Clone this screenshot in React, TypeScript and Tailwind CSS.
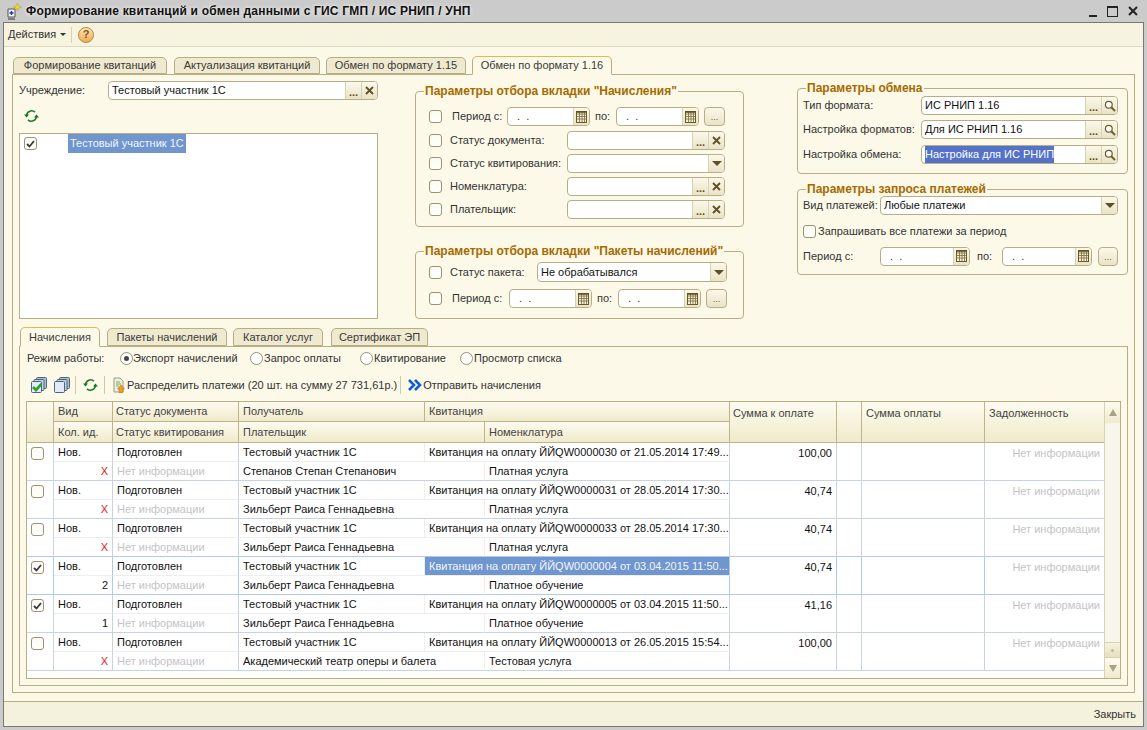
import type { ReactNode } from "react";

// 1C-style form: colours taken from the reference
const FONT = "font-['Liberation_Sans',Arial,sans-serif]";

function Checkbox({ checked }: { checked?: boolean }) {
  return (
    <span className="flex h-[13px] w-[13px] shrink-0 items-center justify-center rounded-[3px] border border-[#9c9373] bg-gradient-to-b from-[#fbfaf2] to-white">
      {checked && (
        <svg width="9" height="8" viewBox="0 0 9 8">
          <path d="M1 4l2.5 2.5L8 1" fill="none" stroke="#3a3a3a" strokeWidth="1.8" />
        </svg>
      )}
    </span>
  );
}

function Radio({ checked }: { checked?: boolean }) {
  return (
    <span className="flex h-[13px] w-[13px] shrink-0 items-center justify-center rounded-full border border-[#9c9373] bg-white">
      {checked && <span className="h-[5px] w-[5px] rounded-full bg-[#444]" />}
    </span>
  );
}

function CalendarIcon() {
  return (
    <svg width="11" height="12" viewBox="0 0 11 12">
      <rect x="0.5" y="0.5" width="10" height="11" fill="#f5f0d8" stroke="#6a5a2a" />
      <path d="M1 3h9M1 5.5h9M1 8h9M3.5 1v10M6 1v10M8.5 1v10" stroke="#7a6a3a" strokeWidth="0.8" />
      <path d="M0 1h11" stroke="#5f5024" strokeWidth="1.4" />
    </svg>
  );
}

function SearchIcon() {
  return (
    <svg width="12" height="12" viewBox="0 0 12 12">
      <circle cx="4.8" cy="4.8" r="3.4" fill="#fff" stroke="#6a5a2a" strokeWidth="1.2" />
      <path d="M7.5 7.5L11 11" stroke="#6a5a2a" strokeWidth="1.8" />
    </svg>
  );
}

function CrossIcon() {
  return (
    <svg width="9" height="9" viewBox="0 0 9 9">
      <path d="M1 1l7 7M8 1L1 8" stroke="#5f5024" strokeWidth="1.8" />
    </svg>
  );
}

function RefreshIcon() {
  return (
    <svg width="15" height="14" viewBox="0 0 15 14">
      <path d="M2.6 6.5A5 5 0 0 1 11 3.2" fill="none" stroke="#1f7a2a" strokeWidth="1.6" />
      <path d="M12.4 7.5A5 5 0 0 1 4 10.8" fill="none" stroke="#1f7a2a" strokeWidth="1.6" />
      <path d="M0 5.5h5L2.5 8.5zM15 8.5h-5l2.5-3z" fill="#1f6f28" />
    </svg>
  );
}

function CellButton({ children, w = "w-[16px]" }: { children: ReactNode; w?: string }) {
  return (
    <span className={`flex ${w} shrink-0 items-center justify-center border-l border-[#d8d2b2] bg-gradient-to-b from-[#fbf8ea] to-[#e9e3c6]`}>
      {children}
    </span>
  );
}

const Dots = () => (
  <CellButton>
    <span className="mt-[3px] text-[11px] leading-none font-bold text-[#5f5024]">...</span>
  </CellButton>
);
const Cross = () => (
  <CellButton>
    <CrossIcon />
  </CellButton>
);
const Search = () => (
  <CellButton>
    <SearchIcon />
  </CellButton>
);
const Calendar = () => (
  <CellButton>
    <CalendarIcon />
  </CellButton>
);
const Arrow = () => (
  <CellButton>
    <span className="h-0 w-0 border-x-[5px] border-t-[5px] border-x-transparent border-t-[#5f5024]" />
  </CellButton>
);

function Field({ w, h = "h-[19px]", children, value }: { w: string; h?: string; children?: ReactNode; value?: ReactNode }) {
  return (
    <div className={`flex ${w} ${h} shrink-0 overflow-hidden rounded-[4px] border border-[#b8ae86] bg-white`}>
      <div className="flex min-w-0 flex-1 items-center pl-[3px] whitespace-pre text-[11px] text-[#111]">{value}</div>
      {children}
    </div>
  );
}

function DateField({ w }: { w: string }) {
  return (
    <Field w={w} value={<span className="pl-[6px] text-[#333]">.  .</span>}>
      <Calendar />
    </Field>
  );
}

function SmallButton({ w = "w-[21px]" }: { w?: string }) {
  return (
    <span className={`flex h-[19px] ${w} shrink-0 items-end justify-center rounded-[4px] border border-[#b8ae86] bg-gradient-to-b from-[#fbf8ea] to-[#e9e3c6] pb-[3px] text-[9px] leading-none text-[#6a5a2a]`}>
      ...
    </span>
  );
}

function Group({ title, className, legendClass = "ml-[8px]", children }: { title: string; className: string; legendClass?: string; children: ReactNode }) {
  return (
    <fieldset className={`rounded-[4px] border border-[#b8ae86] ${className}`}>
      <legend className={`${legendClass} px-[1px] text-[12px] leading-[14px] font-bold text-[#a66a00]`}>{title}</legend>
      {children}
    </fieldset>
  );
}

function Tab({ label, active, tall, w, className = "" }: { label: string; active?: boolean; tall?: boolean; w: string; className?: string }) {
  const height = active ? (tall ? "h-[20px]" : "h-[19px]") : tall ? "mt-px h-[18px]" : "mt-px h-[17px]";
  return (
    <div
      className={`relative flex ${w} ${height} items-center justify-center rounded-t-[5px] border border-[#b8ae86] text-[11px] whitespace-nowrap text-[#3a3a3a] ${
        active ? "z-10 border-t-[#e6b84a] border-b-[#fcf9e8] bg-[#fcf9e8]" : "bg-[#efe9cf]"
      } ${className}`}
    >
      {label}
    </div>
  );
}

function FilterRow({ label, last }: { label: string; last: ReactNode }) {
  return (
    <div className="mt-[4px] flex h-[19px] items-center pl-[13px]">
      <Checkbox />
      <span className="ml-[8px] w-[117px] text-[11px] whitespace-nowrap text-[#333]">{label}</span>
      {last}
    </div>
  );
}

type Rec = {
  checked?: boolean;
  id: string;
  receipt: string;
  payer: string;
  item: string;
  sum: string;
  selected?: boolean;
  blueBottom?: boolean;
};

const RECORDS: Rec[] = [
  { id: "X", receipt: "Квитанция на оплату ЙЙQW0000030 от 21.05.2014 17:49...", payer: "Степанов Степан Степанович", item: "Платная услуга", sum: "100,00" },
  { id: "X", receipt: "Квитанция на оплату ЙЙQW0000031 от 28.05.2014 17:30...", payer: "Зильберт Раиса Геннадьевна", item: "Платная услуга", sum: "40,74" },
  { id: "X", receipt: "Квитанция на оплату ЙЙQW0000033 от 28.05.2014 17:30...", payer: "Зильберт Раиса Геннадьевна", item: "Платная услуга", sum: "40,74", blueBottom: true },
  { checked: true, id: "2", receipt: "Квитанция на оплату ЙЙQW0000004 от 03.04.2015 11:50...", payer: "Зильберт Раиса Геннадьевна", item: "Платное обучение", sum: "40,74", selected: true, blueBottom: true },
  { checked: true, id: "1", receipt: "Квитанция на оплату ЙЙQW0000005 от 03.04.2015 11:50...", payer: "Зильберт Раиса Геннадьевна", item: "Платное обучение", sum: "41,16" },
  { id: "X", receipt: "Квитанция на оплату ЙЙQW0000013 от 26.05.2015 15:54...", payer: "Академический театр оперы и балета", item: "Тестовая услуга", sum: "100,00" },
];

const COLS = "grid-cols-[27px_59px_126px_186px_60px_245px_107px_25px_123px_119px]";

function Head({ className = "", pl = "pl-[4px]", children }: { className?: string; pl?: string; children?: ReactNode }) {
  return (
    <div className={`flex items-center border-r border-b border-[#bdb489] bg-gradient-to-b from-[#fdfbef] to-[#f0eacb] ${pl} text-[11px] whitespace-nowrap text-[#444] ${className}`}>
      {children}
    </div>
  );
}

function Record({ r }: { r: Rec }) {
  const v = r.selected ? "border-[#aecbee]" : "border-[#c8d3de]";
  const bottom = r.blueBottom ? "border-b-[#aecbee]" : "border-b-[#c8d3de]";
  const inner = "border-b-[#eceef1]";
  const cell = "flex items-center border-r border-b pr-[4px] text-[11px] whitespace-nowrap";
  return (
    <div className={`grid ${COLS} grid-rows-[19px_19px] bg-white text-[#111]`}>
      <div className={`row-span-2 border-r border-b pt-[4px] pl-[4px] ${v} ${bottom}`}>
        <Checkbox checked={r.checked} />
      </div>
      <div className={`${cell} pl-[4px] ${v} ${inner}`}>Нов.</div>
      <div className={`${cell} pl-[4px] ${v} ${inner}`}>Подготовлен</div>
      <div className={`${cell} pl-[4px] border-r-[#eceef1] ${inner} ${r.selected ? "border-b-[#aecbee]" : ""}`}>Тестовый участник 1С</div>
      <div className={`${cell} col-span-2 pl-[4px] ${v} ${inner} ${r.selected ? "bg-[#7096cf] text-[#f2f5fb]" : ""}`}>{r.receipt}</div>
      <div className={`${cell} row-span-2 items-start justify-end pt-[2px] ${v} ${bottom}`}>{r.sum}</div>
      <div className={`row-span-2 border-r border-b ${v} ${bottom}`} />
      <div className={`row-span-2 border-r border-b ${v} ${bottom}`} />
      <div className={`${cell} row-span-2 items-start justify-end pt-[2px] text-[#c4c4c4] ${bottom} border-r-0`}>Нет информации</div>
      <div className={`${cell} justify-end ${v} ${bottom} ${r.id === "X" ? "text-[#e02020]" : ""}`}>{r.id}</div>
      <div className={`${cell} pl-[4px] text-[#c4c4c4] ${v} ${bottom}`}>Нет информации</div>
      <div className={`${cell} col-span-2 pl-[4px] border-r-[#eceef1] ${bottom}`}>{r.payer}</div>
      <div className={`${cell} pl-[4px] ${v} ${bottom}`}>{r.item}</div>
    </div>
  );
}

function ToolSep() {
  return <span className="block h-[18px] w-px shrink-0 bg-[#cfc9a8]" />;
}

function StackIcon({ green }: { green?: boolean }) {
  return (
    <svg width="16" height="16" viewBox="0 0 16 16">
      <rect x="5.5" y="0.5" width="10" height="11" rx="1" fill="#a9bfd4" stroke="#4f6478" />
      <rect x="3" y="2.5" width="10" height="11" rx="1" fill="#c2d3e3" stroke="#4f6478" />
      <rect x="0.5" y="4.5" width="10" height="11" rx="1" fill="#e3ecf4" stroke="#4f6478" />
      {green && <path d="M2 10l3 3 5.5-6" fill="none" stroke="#2fa02f" strokeWidth="2.6" />}
    </svg>
  );
}

export default function App() {
  return (
    <div className={`flex h-[730px] w-[1147px] flex-col overflow-hidden bg-[#cbcbcb] ${FONT}`}>
      {/* title bar */}
      <div className="flex h-[22px] shrink-0 items-center pr-[9px] pl-[5px]">
        <svg width="18" height="18" viewBox="0 0 18 18">
          <path d="M3 7h7v8H3z" fill="#f2f2f2" stroke="#555" />
          <path d="M4.5 11h4M6.5 9v4" stroke="#1b3f9c" strokeWidth="1.4" />
          <path d="M3 17h7" stroke="#333" />
          <path d="M12.5 1l1.2 2.8 2.8 1.2-2.8 1.2-1.2 2.8-1.2-2.8L8.5 5l2.8-1.2z" fill="#f4d23c" stroke="#b79a1c" strokeWidth="0.5" />
        </svg>
        <span className="ml-[3px] text-[12px] tracking-[0.19px] font-bold text-[#111] [text-shadow:0_0_4px_#fff]">
          Формирование квитанций и обмен данными с ГИС ГМП / ИС РНИП / УНП
        </span>
        <div className="ml-auto flex items-center gap-[10px]">
          <span className="mt-[10px] h-[2px] w-[8px] bg-[#222]" />
          <span className="h-[11px] w-[11px] border border-t-2 border-[#222]" />
          <svg width="10" height="10" viewBox="0 0 10 10">
            <path d="M1 1l8 8M9 1L1 9" stroke="#222" strokeWidth="2" />
          </svg>
        </div>
      </div>

      <div className="mx-[3px] mb-[3px] flex flex-1 flex-col border border-[#787878] bg-[#fcf9e8]">
        {/* toolbar */}
        <div className="flex h-[24px] shrink-0 items-center border-b border-[#dedabf] bg-[#f6f3df] pl-[4px]">
          <span className="text-[11px] text-[#333]">Действия</span>
          <span className="ml-[4px] h-0 w-0 border-x-[3px] border-t-[3px] border-x-transparent border-t-[#333]" />
          <span className="mr-[6px] ml-[5px] h-[16px] w-px bg-[#d8d2b2]" />
          <span className="flex h-[16px] w-[16px] items-center justify-center rounded-full border border-[#b98a3a] bg-gradient-to-b from-[#fde2b4] to-[#f0aa50] text-[11px] leading-none font-bold text-[#7a5a20]">
            ?
          </span>
        </div>

        {/* outer tabs */}
        <div className="flex flex-1 flex-col px-[8px] pt-[9px]">
          <div className="flex h-[18px] pl-px">
            <Tab label="Формирование квитанций" w="w-[154px]" />
            <Tab label="Актуализация квитанций" w="w-[146px]" className="ml-[7px]" />
            <Tab label="Обмен по формату 1.15" w="w-[140px]" className="ml-[6px]" />
            <Tab label="Обмен по формату 1.16" w="w-[140px]" active className="ml-[6px]" />
          </div>
          <div className="flex h-[619px] flex-col border border-[#b8ae86] px-[6px]">
            {/* upper filters */}
            <div className="flex h-[252px] shrink-0">
              <div className="w-[359px] pt-[6px]">
                <div className="flex items-center">
                  <span className="w-[89px] text-[11px] text-[#333]">Учреждение:</span>
                  <Field w="w-[270px]" value="Тестовый участник 1С">
                    <Dots />
                    <Cross />
                  </Field>
                </div>
                <div className="mt-[9px] pl-[5px]">
                  <RefreshIcon />
                </div>
                <div className="mt-[10px] flex h-[186px] items-start border border-[#b8ae86] bg-white">
                  <span className="mt-[3px] ml-[4px]">
                    <Checkbox checked />
                  </span>
                  <span className="ml-[31px] flex h-[19px] items-center bg-[#7096cf] px-[2px] text-[11px] text-[#f2f5fb]">Тестовый участник 1С</span>
                </div>
              </div>

              <div className="ml-[37px] w-[329px] pt-[9px]">
                <Group title={'Параметры отбора вкладки "Начисления"'} className="pb-[7px]">
                  <div className="mt-[9px] flex h-[19px] items-center pl-[13px]">
                    <Checkbox />
                    <span className="ml-[10px] w-[55px] text-[11px] text-[#333]">Период с:</span>
                    <DateField w="w-[83px]" />
                    <span className="ml-[5px] w-[21px] text-[11px] text-[#333]">по:</span>
                    <DateField w="w-[83px]" />
                    <span className="ml-[5px]">
                      <SmallButton />
                    </span>
                  </div>
                  <div className="h-px" />
                  <FilterRow label="Статус документа:" last={<Field w="w-[158px]"><Dots /><Cross /></Field>} />
                  <FilterRow label="Статус квитирования:" last={<Field w="w-[158px]"><Arrow /></Field>} />
                  <FilterRow label="Номенклатура:" last={<Field w="w-[158px]"><Dots /><Cross /></Field>} />
                  <FilterRow label="Плательщик:" last={<Field w="w-[158px]"><Dots /><Cross /></Field>} />
                </Group>
                <Group title={'Параметры отбора вкладки "Пакеты начислений"'} className="mt-[17px] pb-[10px]">
                  <div className="mt-[4px] flex h-[20px] items-center pl-[13px]">
                    <Checkbox />
                    <span className="ml-[8px] w-[87px] text-[11px] text-[#333]">Статус пакета:</span>
                    <Field w="w-[190px]" h="h-[20px]" value="Не обрабатывался">
                      <Arrow />
                    </Field>
                  </div>
                  <div className="mt-[7px] flex h-[19px] items-center pl-[13px]">
                    <Checkbox />
                    <span className="ml-[10px] w-[57px] text-[11px] text-[#333]">Период с:</span>
                    <DateField w="w-[83px]" />
                    <span className="ml-[5px] w-[21px] text-[11px] text-[#333]">по:</span>
                    <DateField w="w-[83px]" />
                    <span className="ml-[5px]">
                      <SmallButton />
                    </span>
                  </div>
                </Group>
              </div>

              <div className="ml-[53px] w-[331px] pt-[6px]">
                <Group title="Параметры обмена" legendClass="ml-[3px]" className="pr-[9px] pb-[9px] pl-[5px]">
                  <div className="mt-px flex items-center">
                    <span className="w-[118px] text-[11px] text-[#333]">Тип формата:</span>
                    <Field w="w-[197px]" value="ИС РНИП 1.16"><Dots /><Search /></Field>
                  </div>
                  <div className="mt-[5px] flex items-center">
                    <span className="w-[118px] text-[11px] text-[#333]">Настройка форматов:</span>
                    <Field w="w-[197px]" value="Для ИС РНИП 1.16"><Dots /><Search /></Field>
                  </div>
                  <div className="mt-[6px] flex items-center">
                    <span className="w-[118px] text-[11px] text-[#333]">Настройка обмена:</span>
                    <Field
                      w="w-[197px]"
                      value={<span className="bg-[#5372c8] text-white">Настройка для ИС РНИП</span>}
                    >
                      <Dots />
                      <Search />
                    </Field>
                  </div>
                </Group>
                <Group title="Параметры запроса платежей" legendClass="ml-[3px]" className="mt-[8px] pr-[9px] pb-[8px] pl-[5px]">
                  <div className="flex items-center">
                    <span className="w-[77px] text-[11px] whitespace-nowrap text-[#333]">Вид платежей:</span>
                    <Field w="w-[238px]" value="Любые платежи"><Arrow /></Field>
                  </div>
                  <div className="mt-[8px] flex items-center">
                    <Checkbox />
                    <span className="ml-[2px] text-[11px] text-[#333]">Запрашивать все платежи за период</span>
                  </div>
                  <div className="mt-[7px] flex items-center">
                    <span className="w-[77px] text-[11px] text-[#333]">Период с:</span>
                    <DateField w="w-[90px]" />
                    <span className="ml-[7px] w-[25px] text-[11px] text-[#333]">по:</span>
                    <DateField w="w-[90px]" />
                    <span className="ml-[6px]">
                      <SmallButton w="w-[20px]" />
                    </span>
                  </div>
                </Group>
              </div>
            </div>

            {/* inner tabs */}
            <div className="flex h-[19px] shrink-0 pl-px">
              <Tab label="Начисления" w="w-[80px]" active tall />
              <Tab label="Пакеты начислений" w="w-[120px]" tall className="ml-[7px]" />
              <Tab label="Каталог услуг" w="w-[90px]" tall className="ml-[6px]" />
              <Tab label="Сертификат ЭП" w="w-[97px]" tall className="ml-[8px]" />
            </div>
            <div className="mb-[6px] flex flex-1 flex-col border border-[#b8ae86] px-[6px]">
              <div className="flex h-[23px] shrink-0 items-center pl-px text-[11px] whitespace-nowrap text-[#333]">
                <span className="w-[93px]">Режим работы:</span>
                <span className="flex w-[130px] items-center"><Radio checked />Экспорт начислений</span>
                <span className="flex w-[110px] items-center gap-px"><Radio />Запрос оплаты</span>
                <span className="flex w-[100px] items-center gap-px"><Radio />Квитирование</span>
                <span className="flex items-center gap-px"><Radio />Просмотр списка</span>
              </div>
              <div className="flex h-[31px] shrink-0 items-center pb-[1px] pl-[5px] text-[11px] whitespace-nowrap text-[#333]">
                <StackIcon green />
                <span className="ml-[7px]"><StackIcon /></span>
                <span className="ml-[5px]"><ToolSep /></span>
                <span className="ml-[7px]"><RefreshIcon /></span>
                <span className="ml-[6px]"><ToolSep /></span>
                <svg className="ml-[8px]" width="12" height="16" viewBox="0 0 12 16">
                  <path d="M1 1h6l3 3v11H1z" fill="#eef0dc" stroke="#9a9a8a" />
                  <path d="M3 5h4M3 7h5M3 9h3" stroke="#8aa070" />
                  <path d="M8 8l3.5 4H10v3.5H6V12H4.5z" fill="#e8a020" stroke="#a86a00" strokeWidth="0.5" />
                </svg>
                <span className="ml-[2px]">Распределить платежи (20 шт. на сумму 27 731,61р.)</span>
                <span className="ml-[3px]"><ToolSep /></span>
                <svg className="ml-[7px]" width="14" height="12" viewBox="0 0 14 12">
                  <path d="M1 1l5 5-5 5M7 1l5 5-5 5" fill="none" stroke="#0f5fd0" strokeWidth="2.6" />
                </svg>
                <span className="ml-px">Отправить начисления</span>
              </div>

              {/* table */}
              <div className="mb-[6px] flex h-[278px] shrink-0 border border-[#b8ae86] bg-white">
                <div className="w-[1077px] shrink-0">
                  <div className={`grid ${COLS} grid-rows-[20px_21px]`}>
                    <Head className="row-span-2" />
                    <Head>Вид</Head>
                    <Head pl="pl-[3px]">Статус документа</Head>
                    <Head>Получатель</Head>
                    <Head className="col-span-2">Квитанция</Head>
                    <Head pl="pl-[3px]" className="row-span-2 items-start pt-[3px]">Сумма к оплате</Head>
                    <Head className="row-span-2" />
                    <Head className="row-span-2 items-start pt-[3px]">Сумма оплаты</Head>
                    <Head className="row-span-2 items-start border-r-0 pt-[3px]">Задолженность</Head>
                    <Head>Кол. ид.</Head>
                    <Head pl="pl-[3px]">Статус квитирования</Head>
                    <Head className="col-span-2">Плательщик</Head>
                    <Head>Номенклатура</Head>
                  </div>
                  {RECORDS.map((r) => (
                    <Record key={r.receipt} r={r} />
                  ))}
                </div>
                <div className="flex w-[16px] shrink-0 flex-col border-l border-[#d8d2b2] bg-[#f8f6ec]">
                  <span className="flex h-[21px] items-center justify-center bg-gradient-to-b from-[#fdfbef] to-[#f0eacb]">
                    <span className="h-0 w-0 border-x-[4px] border-b-[7px] border-x-transparent border-b-[#a8a28a]" />
                  </span>
                  <span className="flex-1" />
                  <span className="flex h-[16px] items-center justify-center border-y border-[#d8d2b2] bg-gradient-to-b from-[#f6f2dc] to-[#e6dfbf]">
                    <span className="h-[3px] w-[3px] rounded-full bg-[#c0b998]" />
                  </span>
                  <span className="flex h-[20px] items-center justify-center bg-gradient-to-b from-[#fdfbef] to-[#f0eacb]">
                    <span className="h-0 w-0 border-x-[4px] border-t-[7px] border-x-transparent border-t-[#a8a28a]" />
                  </span>
                </div>
              </div>
            </div>
          </div>
        </div>

        {/* bottom bar */}
        <div className="flex h-[25px] shrink-0 items-center justify-end border-t border-[#b8ae86] bg-[#f4f1dc] pr-[7px] text-[11px] text-[#333]">
          Закрыть
        </div>
      </div>
    </div>
  );
}
